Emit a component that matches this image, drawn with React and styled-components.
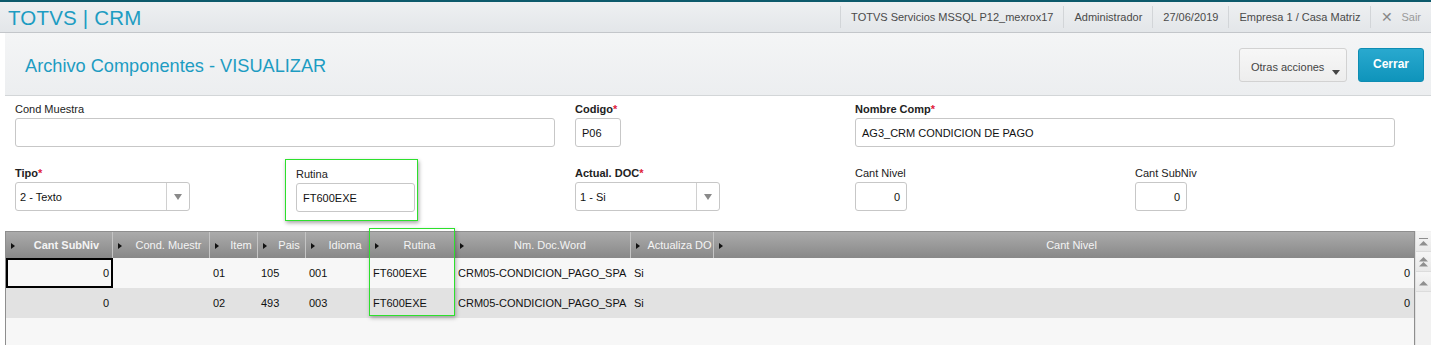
import React from "react";
import styled, { createGlobalStyle } from "styled-components";

const GlobalStyle = createGlobalStyle`
  html, body {
    margin: 0;
    padding: 0;
    background: #ffffff;
    font-family: "Liberation Sans", Arial, sans-serif;
  }
  * { box-sizing: border-box; }
`;

const Page = styled.div`
  width: 1431px;
  height: 345px;
  display: flex;
  flex-direction: column;
  overflow: hidden;
  background: #fff;
`;

const TopBar = styled.div`
  height: 33px;
  flex-shrink: 0;
  display: flex;
  align-items: center;
  border-top: 2px solid #0d5a6c;
  border-bottom: 1px solid #c3c6ca;
  background: linear-gradient(#eef0f2, #e3e6e9);
  padding: 0 0 0 8px;
`;

const Brand = styled.div`
  font-size: 20.5px;
  color: #1d9cc2;
  letter-spacing: 0.2px;
  flex: 1;
  padding-top: 1px;
`;

const InfoList = styled.div`
  display: flex;
  align-items: center;
  height: 22px;
`;

const InfoItem = styled.div`
  font-size: 11px;
  padding: 0 10px;
  height: 22px;
  line-height: 22px;
  border-left: 1px solid #d2d5d8;
  display: flex;
  align-items: center;
  gap: 8px;
  color: ${({ $muted }) => ($muted ? "#9a9a9a" : "#4a4a4a")};
`;

const CloseMark = styled.span`
  font-size: 14px;
  color: #888;
`;

const Frame = styled.div`
  flex: 1;
  display: flex;
  flex-direction: column;
  padding-left: 5px;
  min-height: 0;
`;

const Header = styled.div`
  height: 63px;
  flex-shrink: 0;
  display: flex;
  align-items: center;
  padding: 0 7px 0 20px;
  background: linear-gradient(#f4f5f6, #eceef0);
  border-bottom: 1px solid #d3d6d8;
`;

const Title = styled.div`
  flex: 1;
  font-size: 18.2px;
  color: #1d9cc2;
  padding-top: 4px;
`;

const Actions = styled.div`
  display: flex;
  gap: 11px;
  padding-top: 1px;
`;

const MoreButton = styled.div`
  position: relative;
  width: 108px;
  height: 34px;
  border: 1px solid #d2d2d2;
  border-radius: 3px;
  background: linear-gradient(#f7f7f7, #ededed);
  font-size: 11px;
  color: #444;
  padding: 12px 0 0 11px;
  &::after {
    content: "";
    position: absolute;
    right: 6px;
    bottom: 6px;
    border-left: 4px solid transparent;
    border-right: 4px solid transparent;
    border-top: 5px solid #444;
  }
`;

const CloseButton = styled.div`
  width: 66px;
  height: 34px;
  border-radius: 3px;
  background: linear-gradient(#29a9cf, #0f94bb);
  border: 1px solid #0e8db3;
  color: #fff;
  font-size: 12px;
  font-weight: bold;
  display: flex;
  align-items: center;
  justify-content: center;
  padding-bottom: 2px;
`;

const Form = styled.div`
  display: grid;
  grid-template-columns: repeat(5, 280px);
  row-gap: 20px;
  padding: 7px 0 0 10px;
  flex-shrink: 0;
`;

const Field = styled.div`
  grid-column: span ${({ $span }) => $span || 1};
  display: flex;
  flex-direction: column;
  ${({ $highlight }) =>
    $highlight &&
    `
    margin: -8px 157px -9px -10px;
    padding: 8px 5px 8px 10px;
    border: 1px solid #2de02d;
    box-shadow: 1px 2px 4px rgba(0,0,0,0.35);
  `}
`;

const Label = styled.div`
  font-size: 11px;
  line-height: 13px;
  color: #222;
  margin-bottom: 2px;
  font-weight: ${({ $bold }) => ($bold ? "bold" : "normal")};
  & span {
    color: #e0203a;
  }
`;

const Input = styled.div`
  width: ${({ $w }) => $w}px;
  height: 29px;
  border: 1px solid #c7c7c7;
  border-radius: 3px;
  background: #fff;
  font-size: 11px;
  color: #111;
  display: flex;
  align-items: center;
  justify-content: ${({ $right }) => ($right ? "flex-end" : "flex-start")};
  padding: 0 6px;
`;

const Select = styled(Input)`
  padding: 0 0 0 4px;
`;

const SelectValue = styled.span`
  flex: 1;
`;

const SelectArrow = styled.div`
  width: 23px;
  height: 100%;
  border-left: 1px solid #d0d0d0;
  display: flex;
  align-items: center;
  justify-content: center;
  &::after {
    content: "";
    border-left: 4px solid transparent;
    border-right: 4px solid transparent;
    border-top: 6px solid #8a8a8a;
  }
`;

const GridWrap = styled.div`
  position: relative;
  flex: 1;
  display: flex;
  margin-top: 19px;
  min-height: 0;
`;

const Table = styled.div`
  flex: 1;
  border: 1px solid #8e8e8e;
  border-bottom: none;
  background: #f7f7f7;
`;

const Row = styled.div`
  display: grid;
  grid-template-columns: 107px 97px 48px 48px 64px 85px 176px 83px 1fr;
  height: ${({ $head }) => ($head ? 26 : 30)}px;
  background: ${({ $head, $alt }) =>
    $head ? "linear-gradient(#ababab, #888888)" : $alt ? "#e2e2e2" : "#f7f7f7"};
`;

const HeadCell = styled.div`
  position: relative;
  border-right: 1px solid #c4c4c4;
  color: #f4f4f4;
  font-size: 11px;
  font-weight: ${({ $bold }) => ($bold ? "bold" : "normal")};
  display: flex;
  align-items: center;
  justify-content: center;
  padding-left: 15px;
  white-space: nowrap;
  overflow: hidden;
  &::before {
    content: "";
    position: absolute;
    left: 5px;
    top: 11px;
    border-top: 3px solid transparent;
    border-bottom: 3px solid transparent;
    border-left: 4px solid #111;
  }
  &:last-child {
    border-right: none;
  }
`;

const Cell = styled.div`
  font-size: 11px;
  color: #111;
  display: flex;
  align-items: center;
  justify-content: ${({ $right }) => ($right ? "flex-end" : "flex-start")};
  padding: 0 4px 0 3px;
  white-space: nowrap;
  ${({ $selected }) => $selected && "border: 2px solid #000; padding-right: 2px;"}
`;

const ColumnHighlight = styled.div`
  position: absolute;
  top: -3px;
  left: 364px;
  width: 86px;
  height: 88px;
  border: 1px solid #2de02d;
  box-shadow: 1px 2px 4px rgba(0, 0, 0, 0.3);
  pointer-events: none;
`;

const ScrollBar = styled.div`
  width: 16px;
  background: #f1f1f1;
  border-left: 1px solid #e0e0e0;
  display: flex;
  flex-direction: column;
  padding-top: 1px;
`;

const ScrollButton = styled.div`
  height: 20px;
  display: flex;
  align-items: center;
  justify-content: center;
  border-bottom: 1px solid #dcdcdc;
  background: linear-gradient(#f6f6f6, #e9e9e9);
`;

const ScrollIcon = ({ type }) => (
  <svg width="9" height="12" viewBox="0 0 9 12">
    {type === "top" && <rect x="0" y="2" width="9" height="1" fill="#8f8f8f" />}
    {type === "double" && <polygon points="4.5,1 9,5.5 0,5.5" fill="#8f8f8f" />}
    <polygon
      points={type === "double" ? "4.5,6 9,10.5 0,10.5" : "4.5,5 9,9.5 0,9.5"}
      fill="#8f8f8f"
    />
  </svg>
);

const columns = [
  { title: "Cant SubNiv", bold: true },
  { title: "Cond. Muestr" },
  { title: "Item" },
  { title: "Pais" },
  { title: "Idioma" },
  { title: "Rutina" },
  { title: "Nm. Doc.Word" },
  { title: "Actualiza DO" },
  { title: "Cant Nivel" },
];

const rows = [
  ["0", "", "01", "105", "001", "FT600EXE", "CRM05-CONDICION_PAGO_SPA", "Si", "0"],
  ["0", "", "02", "493", "003", "FT600EXE", "CRM05-CONDICION_PAGO_SPA", "Si", "0"],
];

const App = () => {
  return (
    <Page>
      <GlobalStyle />
      <TopBar>
        <Brand>TOTVS | CRM</Brand>
        <InfoList>
          <InfoItem>TOTVS Servicios MSSQL P12_mexrox17</InfoItem>
          <InfoItem>Administrador</InfoItem>
          <InfoItem>27/06/2019</InfoItem>
          <InfoItem>Empresa 1 / Casa Matriz</InfoItem>
          <InfoItem $muted>
            <CloseMark>✕</CloseMark>Sair
          </InfoItem>
        </InfoList>
      </TopBar>
      <Frame>
        <Header>
          <Title>Archivo Componentes - VISUALIZAR</Title>
          <Actions>
            <MoreButton>Otras acciones</MoreButton>
            <CloseButton>Cerrar</CloseButton>
          </Actions>
        </Header>
        <Form>
          <Field $span={2}>
            <Label>Cond Muestra</Label>
            <Input $w={540} />
          </Field>
          <Field>
            <Label $bold>
              Codigo<span>*</span>
            </Label>
            <Input $w={46}>P06</Input>
          </Field>
          <Field $span={2}>
            <Label $bold>
              Nombre Comp<span>*</span>
            </Label>
            <Input $w={540}>AG3_CRM CONDICION DE PAGO</Input>
          </Field>

          <Field>
            <Label $bold>
              Tipo<span>*</span>
            </Label>
            <Select $w={175}>
              <SelectValue>2 - Texto</SelectValue>
              <SelectArrow />
            </Select>
          </Field>
          <Field $highlight>
            <Label>Rutina</Label>
            <Input $w={119}>FT600EXE</Input>
          </Field>
          <Field>
            <Label $bold>
              Actual. DOC<span>*</span>
            </Label>
            <Select $w={145}>
              <SelectValue>1 - Si</SelectValue>
              <SelectArrow />
            </Select>
          </Field>
          <Field>
            <Label>Cant Nivel</Label>
            <Input $w={52} $right>
              0
            </Input>
          </Field>
          <Field>
            <Label>Cant SubNiv</Label>
            <Input $w={52} $right>
              0
            </Input>
          </Field>
        </Form>
        <GridWrap>
          <Table>
            <Row $head>
              {columns.map((c) => (
                <HeadCell key={c.title} $bold={c.bold}>
                  {c.title}
                </HeadCell>
              ))}
            </Row>
            {rows.map((r, i) => (
              <Row key={i} $alt={i % 2 === 1}>
                {r.map((v, j) => (
                  <Cell
                    key={j}
                    $right={j === 0 || j === 8}
                    $selected={i === 0 && j === 0}
                  >
                    {v}
                  </Cell>
                ))}
              </Row>
            ))}
          </Table>
          <ScrollBar>
            <ScrollButton>
              <ScrollIcon type="top" />
            </ScrollButton>
            <ScrollButton>
              <ScrollIcon type="double" />
            </ScrollButton>
            <ScrollButton>
              <ScrollIcon type="single" />
            </ScrollButton>
          </ScrollBar>
          <ColumnHighlight />
        </GridWrap>
      </Frame>
    </Page>
  );
};

export default App;
